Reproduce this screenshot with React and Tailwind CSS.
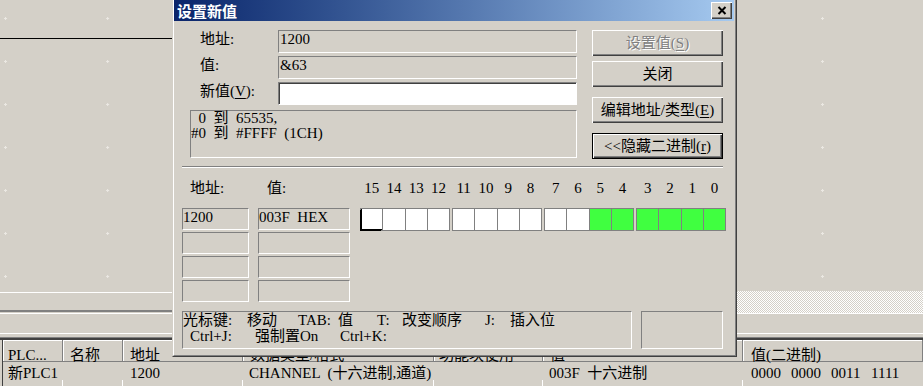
import React from 'react'

const sunken = 'border border-t-[#808080] border-l-[#808080] border-r-white border-b-white'
const raised = 'shadow-[inset_1px_1px_0_#fff,inset_-1px_-1px_0_#404040,inset_-2px_-2px_0_#808080]'

const groups = [
  [15, 14, 13, 12],
  [11, 10, 9, 8],
  [7, 6, 5, 4],
  [3, 2, 1, 0],
]
const value = 0x3f

function WinButton({ children, isDefault, disabled, className = '' }) {
  return (
    <div
      className={`h-[26px] flex items-center justify-center whitespace-nowrap ${raised} ${
        isDefault ? 'border border-black' : ''
      } ${disabled ? 'text-[#808080] [text-shadow:1px_1px_0_#fff]' : ''} ${className}`}
    >
      {children}
    </div>
  )
}

function BitGrid() {
  return (
    <div className="ml-[10px]">
      <div className="h-[40px] flex items-center gap-[2px]">
        {groups.map((g, i) => (
          <div key={i} className="flex w-[90px] px-px gap-px">
            {g.map((n) => (
              <div key={n} className="w-[21.25px] text-center">
                {n}
              </div>
            ))}
          </div>
        ))}
      </div>
      <div className="flex gap-[2px]">
        {groups.map((g, i) => (
          <div key={i} className="flex gap-px p-px bg-[#808080]">
            {g.map((n) => (
              <div
                key={n}
                className={`w-[21.25px] h-[21px] ${(value >> n) & 1 ? 'bg-[#40ff40]' : 'bg-white'} ${
                  n === 15 ? 'shadow-[-1px_1px_0_#000,inset_1px_-1px_0_#000]' : ''
                }`}
              />
            ))}
          </div>
        ))}
      </div>
    </div>
  )
}

function Dialog() {
  return (
    <div className="absolute left-[172px] top-0 w-[565px] h-[357px] bg-[#d4d0c8] border-l border-r border-b border-l-[#d4d0c8] border-r-[#404040] border-b-[#404040]">
      <div className="h-full border-l border-r border-b border-l-white border-r-[#808080] border-b-[#808080] pr-px pb-px">
        {/* title bar */}
        <div className="h-[21px] flex items-center bg-linear-to-r from-[#0a246a] to-[#a6caf0]">
          <span className="pl-[3px] text-white font-bold font-['Noto_Sans_CJK_SC',sans-serif] text-[15px] leading-[16px]">
            设置新值
          </span>
          <div className={`ml-auto mr-[2px] w-[21px] h-[17px] bg-[#d4d0c8] flex items-center justify-center ${raised}`}>
            <svg width="10" height="9" viewBox="0 0 10 9">
              <path d="M1.5 1 L8.5 8 M8.5 1 L1.5 8" stroke="#000" strokeWidth="2" />
            </svg>
          </div>
        </div>

        {/* top section */}
        <div className="flex pt-[9px]">
          <div className="w-[403px]">
            <div className="flex h-[23px]">
              <div className="w-[104px] pl-[26px] pt-px">地址:</div>
              <div className={`flex-1 ${sunken} pl-px`}>1200</div>
            </div>
            <div className="flex h-[23px] mt-[3px]">
              <div className="w-[104px] pl-[26px] pt-px">值:</div>
              <div className={`flex-1 ${sunken} pl-px`}>&amp;63</div>
            </div>
            <div className="flex h-[23px] mt-[3px]">
              <div className="w-[104px] pl-[26px] pt-px whitespace-nowrap">
                新值(<span className="underline underline-offset-2">V</span>):
              </div>
              <div className={`flex-1 bg-white ${sunken} shadow-[inset_1px_1px_0_#404040]`} />
            </div>
            <div className={`ml-[16px] mt-[5px] h-[48px] ${sunken}`}>
              <div className="flex h-[15px] leading-[15px]">
                <span className="w-[22.5px] pl-[7.5px]">0</span>
                <span className="w-[22.5px]">到</span>
                <span>65535,</span>
              </div>
              <div className="flex h-[15px] leading-[15px]">
                <span className="w-[22.5px]">#0</span>
                <span className="w-[22.5px]">到</span>
                <span className="whitespace-pre">#FFFF  (1CH)</span>
              </div>
            </div>
          </div>
          <div className="ml-[15px] w-[131px]">
            <WinButton disabled>
              设置值(<span className="underline underline-offset-2">S</span>)
            </WinButton>
            <WinButton className="mt-[5px]">关闭</WinButton>
            <WinButton className="mt-[10px]">
              编辑地址/类型(<span className="underline underline-offset-2">E</span>)
            </WinButton>
            <WinButton isDefault className="mt-[10px]">
              &lt;&lt;隐藏二进制(<span className="underline underline-offset-2">r</span>)
            </WinButton>
          </div>
        </div>

        {/* separator */}
        <div className="mt-[7px] ml-[8px] w-[541px] border-t border-b border-t-[#808080] border-b-white" />

        {/* binary section */}
        <div className="flex ml-[8px]">
          <div className="w-[67px]">
            <div className="h-[40px] flex items-center pl-[8px]">地址:</div>
            <div className="flex flex-col gap-[2px]">
              <div className={`h-[22px] ${sunken}`}>1200</div>
              <div className={`h-[22px] ${sunken}`} />
              <div className={`h-[22px] ${sunken}`} />
              <div className={`h-[22px] ${sunken}`} />
            </div>
          </div>
          <div className="ml-[9px] w-[92px]">
            <div className="h-[40px] flex items-center pl-[9px]">值:</div>
            <div className="flex flex-col gap-[2px]">
              <div className={`h-[22px] ${sunken} whitespace-pre`}>003F  HEX</div>
              <div className={`h-[22px] ${sunken}`} />
              <div className={`h-[22px] ${sunken}`} />
              <div className={`h-[22px] ${sunken}`} />
            </div>
          </div>
          <BitGrid />
        </div>

        {/* status */}
        <div className="flex mt-[9px] ml-[8px]">
          <div className={`w-[450px] h-[38px] ${sunken}`}>
            <div className="flex h-[16px] whitespace-nowrap">
              <span className="w-[64px] shrink-0">光标键:</span>
              <span className="w-[51px] shrink-0">移动</span>
              <span className="w-[40px] shrink-0">TAB:</span>
              <span className="w-[39px] shrink-0">值</span>
              <span className="w-[25px] shrink-0">T:</span>
              <span className="w-[83px] shrink-0">改变顺序</span>
              <span className="w-[25px] shrink-0">J:</span>
              <span>插入位</span>
            </div>
            <div className="flex h-[16px] pl-[7px] whitespace-nowrap">
              <span className="w-[65px] shrink-0">Ctrl+J:</span>
              <span className="w-[85px] shrink-0">强制置On</span>
              <span>Ctrl+K:</span>
            </div>
          </div>
          <div className={`ml-[9px] w-[82px] h-[38px] ${sunken}`} />
        </div>
      </div>
    </div>
  )
}

const head = 'h-full shrink-0 border-r border-r-[#808080] shadow-[inset_1px_1px_0_#fff] pt-[7px] whitespace-nowrap'
const cell = 'h-full shrink-0 pt-[3px] whitespace-pre'
const below = 'h-full shrink-0 border-r border-r-white'

export default function App() {
  return (
    <div className="relative w-[923px] h-[386px] overflow-hidden bg-[#d4d0c8] text-black text-[15px] leading-[16px] font-['Liberation_Serif','Noto_Sans_CJK_SC',serif]">
      <div className="flex flex-col h-full">
        {/* ladder canvas */}
        <div className="relative h-[291px] pt-[38px]">
          <svg className="absolute inset-0 w-full h-full pointer-events-none">
            <defs>
              <pattern id="grid" x="4" y="17" width="102.125" height="43" patternUnits="userSpaceOnUse">
                <path d="M1 0h1v3h-1z M0 1h3v1h-3z" fill="#ebe8e3" />
              </pattern>
            </defs>
            <rect width="100%" height="100%" fill="url(#grid)" />
          </svg>
          <div className="relative h-px w-[172px] bg-black" />
        </div>

        {/* scroll strip */}
        <div className="flex h-[22px]">
          <div className="w-[650px] mt-px h-[20px] border-t border-b-2 border-t-white border-b-[#808080]" />
          <div className="flex-1 bg-[repeating-conic-gradient(#d4d0c8_0%_25%,#ffffff_0%_50%)] bg-[length:2px_2px]" />
        </div>

        {/* splitter strip */}
        <div className="h-[24px] pb-[3px]">
          <div className="h-full border-t border-b border-white" />
        </div>
        <div className="h-px bg-[#808080]" />
        <div className="h-[2px] bg-[#404040]" />

        {/* table */}
        <div className="flex-1 ml-[2px] border-l border-l-[#404040] flex flex-col">
          <div className="flex h-[22px] border-b border-b-[#808080]">
            <div className={`${head} w-[60px] pl-[5px]`}>PLC...</div>
            <div className={`${head} w-[60px] pl-[7px]`}>名称</div>
            <div className={`${head} w-[120px] pl-[7px]`}>地址</div>
            <div className={`${head} w-[191px] pl-[7px]`}>数据类型/格式</div>
            <div className={`${head} w-[109px] pl-[5px]`}>功能块使用</div>
            <div className={`${head} w-[200px] pl-[7px]`}>值</div>
            <div className={`${head} flex-1 pl-[8px]`}>值(二进制)</div>
          </div>
          <div className="flex h-[18px]">
            <div className={`${cell} w-[60px] pl-[5px]`}>新PLC1</div>
            <div className={`${cell} w-[60px]`} />
            <div className={`${cell} w-[120px] pl-[7px]`}>1200</div>
            <div className={`${cell} w-[191px] pl-[6px]`}>CHANNEL  (十六进制,通道)</div>
            <div className={`${cell} w-[109px]`} />
            <div className={`${cell} w-[200px] pl-[6px]`}>003F  十六进制</div>
            <div className={`${cell} flex-1 pl-[8px] flex`}>
              <span className="w-[40px]">0000</span>
              <span className="w-[40px]">0000</span>
              <span className="w-[40px]">0011</span>
              <span>1111</span>
            </div>
          </div>
          <div className="flex flex-1">
            <div className={`${below} w-[60px]`} />
            <div className={`${below} w-[60px]`} />
            <div className={`${below} w-[120px]`} />
            <div className={`${below} w-[191px]`} />
            <div className={`${below} w-[109px]`} />
            <div className={`${below} w-[200px]`} />
          </div>
        </div>
      </div>
      <Dialog />
    </div>
  )
}
